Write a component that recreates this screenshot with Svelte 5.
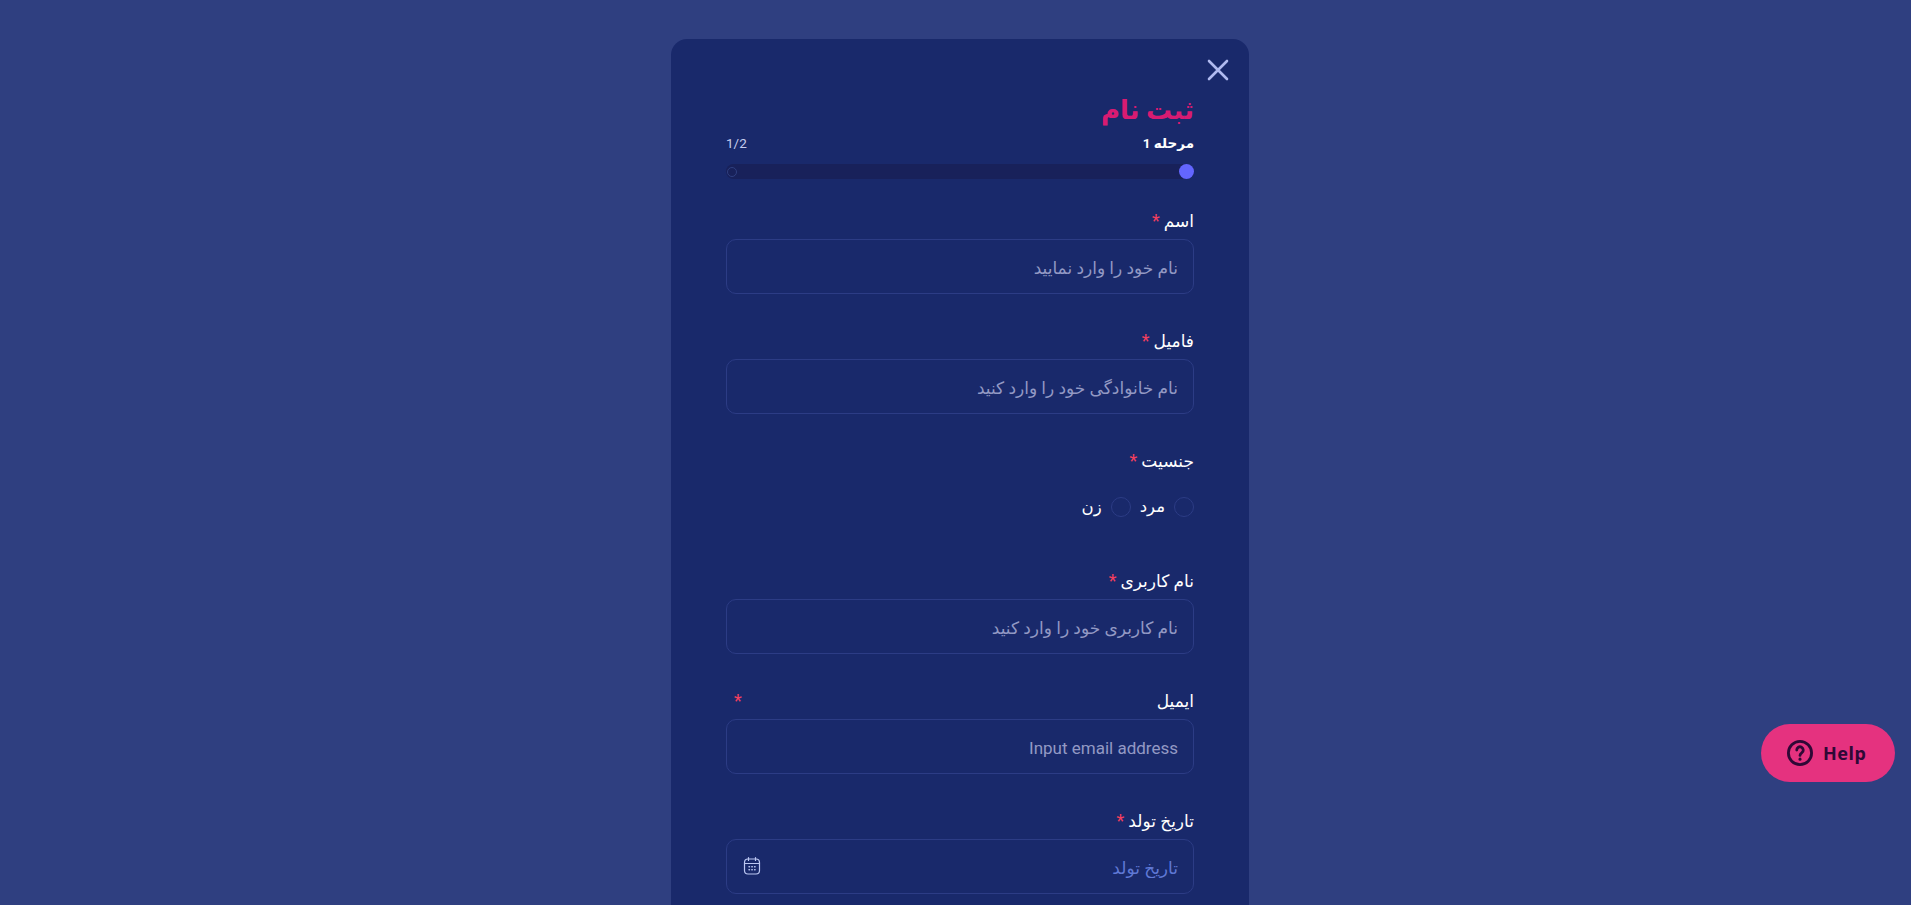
<script>
	const fields = [
		{ label: 'اسم', placeholder: 'نام خود را وارد نمایید' },
		{ label: 'فامیل', placeholder: 'نام خانوادگی خود را وارد کنید' },
		{ label: 'جنسیت', radios: ['مرد', 'زن'] },
		{ label: 'نام کاربری', placeholder: 'نام کاربری خود را وارد کنید' },
		{ label: 'ایمیل', placeholder: 'Input email address', spread: true },
		{ label: 'تاریخ تولد', placeholder: 'تاریخ تولد', date: true }
	];
</script>

<main class="page">
	<section class="modal" dir="rtl">
		<button class="close" aria-label="بستن">
			<svg viewBox="0 0 24 24" width="24" height="24" fill="none" stroke="currentColor" stroke-width="2.600" stroke-linecap="round">
				<path d="M3 3l18 18M21 3L3 21" />
			</svg>
		</button>

		<h1>ثبت نام</h1>
		<div class="step">
			<strong>مرحله 1</strong>
			<span>1/2</span>
		</div>
		<div class="progress">
			<i class="dot active"></i>
			<i class="dot"></i>
		</div>

		<form>
			{#each fields as field}
				<div class="field">
					<label class:spread={field.spread}>
						<span>{field.label}</span>
						<em>*</em>
					</label>
					{#if field.radios}
						<div class="radios">
							{#each field.radios as option}
								<label class="radio">
									<input type="radio" name="gender" />
									<span>{option}</span>
								</label>
							{/each}
						</div>
					{:else}
						<div class="control">
							<input type="text" class:date={field.date} placeholder={field.placeholder} />
							{#if field.date}
								<svg class="calendar" viewBox="0 0 20 20" width="20" height="20" fill="none" stroke="currentColor" stroke-width="1.200" stroke-linecap="round">
									<rect x="2.500" y="3" width="15" height="15" rx="3.500" />
									<path d="M2.500 7.500h15M6.500 1.500v3M13.500 1.500v3" />
									<path d="M7 10.800h.5M9.800 10.800h.5M12.600 10.800h.5M7 13.800h.5M9.800 13.800h.5M12.600 13.800h.5" stroke-width="1.400" />
								</svg>
							{/if}
						</div>
					{/if}
				</div>
			{/each}
		</form>
	</section>

	<button class="help">
		<svg viewBox="0 0 24 24" width="26" height="26" fill="none" stroke="currentColor" stroke-width="2.600" stroke-linecap="round">
			<circle cx="12" cy="12" r="10.700" />
			<path d="M9 9.300a3 3 0 1 1 4.600 2.500c-1 .7-1.600 1.300-1.600 2.400" />
			<path d="M12 17.500v.2" stroke-width="2.800" />
		</svg>
		<span>Help</span>
	</button>
</main>

<style>
	:global(html),
	:global(body) {
		margin: 0;
		height: 100%;
		overflow: hidden;
		background: #2f3f80;
	}

	.page {
		display: flex;
		justify-content: center;
		padding: 39px 0 0 9px;
		font-family: "Roboto", "DejaVu Sans", sans-serif;
		color: #fff;
	}

	.modal {
		position: relative;
		box-sizing: border-box;
		width: 578px;
		min-height: 1000px;
		padding: 51px 55px 40px;
		background: #19296b;
		border-radius: 16px;
	}

	.close {
		position: absolute;
		top: 19px;
		left: 535px;
		display: flex;
		padding: 0;
		border: none;
		background: none;
		color: #b0baf0;
		cursor: pointer;
	}

	h1 {
		margin: 0;
		font-size: 26px;
		line-height: 40px;
		font-weight: 700;
		color: #d81b72;
	}

	.step {
		display: flex;
		justify-content: space-between;
		align-items: center;
		margin-top: 2px;
		height: 22px;
		font-size: 13.500px;
	}

	.step strong {
		font-weight: 700;
	}

	.step span {
		color: #c6cced;
	}

	.progress {
		display: flex;
		justify-content: space-between;
		align-items: center;
		margin-top: 10px;
		height: 15px;
		background: #18215a;
		border-radius: 8px;
	}

	.dot {
		box-sizing: border-box;
		width: 10px;
		height: 10px;
		margin-left: 1px;
		border: 1px solid #2f3f80;
		border-radius: 50%;
	}

	.dot.active {
		width: 15px;
		height: 15px;
		margin: 0;
		border: none;
		background: #6366ff;
	}

	form {
		margin-top: 29px;
	}

	.field {
		margin-bottom: 34px;
	}

	.field > label {
		display: flex;
		gap: 4px;
		height: 24px;
		margin-bottom: 7px;
		font-size: 17px;
		line-height: 26px;
	}

	.field > label.spread {
		justify-content: space-between;
	}

	em {
		margin-left: 8px;
		font-size: 18px;
		line-height: 26px;
		font-style: normal;
		color: #f43f5e;
	}

	.control {
		position: relative;
	}

	input[type="text"] {
		display: block;
		box-sizing: border-box;
		width: 100%;
		height: 55px;
		padding: 2px 15px 0;
		border: 1px solid #2c3c85;
		border-radius: 10px;
		background: #19296b;
		color: #fff;
		font: 17px "Roboto", "DejaVu Sans", sans-serif;
		outline: none;
	}

	input[type="text"]::placeholder {
		color: #9399c4;
		opacity: 1;
	}

	input.date::placeholder {
		color: #6079d6;
	}

	.calendar {
		position: absolute;
		top: 17px;
		left: 16px;
		color: #bcc7f2;
	}

	.radios {
		display: flex;
		align-items: center;
		gap: 9px;
		height: 55px;
	}

	.radio {
		display: flex;
		align-items: center;
		gap: 9px;
		font-size: 16.500px;
	}

	.radio input {
		appearance: none;
		box-sizing: border-box;
		width: 20px;
		height: 20px;
		margin: 0;
		border: 1px solid #2c3c85;
		border-radius: 50%;
		background: #19296b;
	}

	.help {
		position: fixed;
		left: 1761px;
		top: 724px;
		display: flex;
		align-items: center;
		gap: 10px;
		box-sizing: border-box;
		width: 134px;
		height: 58px;
		padding: 0 26px;
		border: none;
		border-radius: 29px;
		background: #e5327f;
		color: #2f0836;
		font: 700 18px "Noto Sans", sans-serif;
		letter-spacing: 0.5px;
		cursor: pointer;
	}
</style>
